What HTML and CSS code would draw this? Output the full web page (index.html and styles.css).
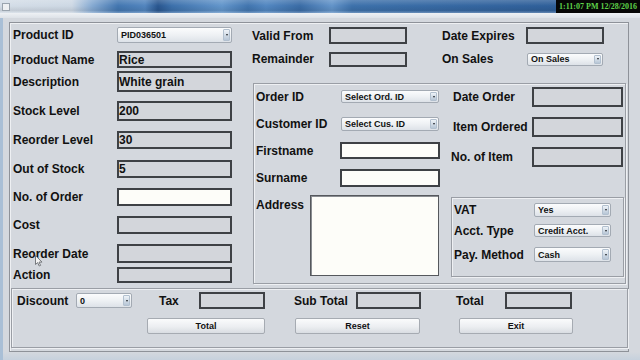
FILE: index.html
```html
<!DOCTYPE html>
<html>
<head>
<meta charset="utf-8">
<link rel="stylesheet" href="styles.css">
</head>
<body>
<div class="titlebar">
  <span class="appicon"></span>
  <div class="clock">1:11:07 PM 12/28/2016</div>
</div>
<div class="subbar"></div>
<div class="window">
  <div class="frame">
    <div class="upper">
      <div class="left-col">
        <div class="lrow r1"><label>Product ID</label><div class="select"><span class="stext">PID036501</span><span class="arrow"><i></i></span></div></div>
        <div class="lrow r2"><label>Product Name</label><div class="box">Rice</div></div>
        <div class="lrow r3"><label>Description</label><div class="box">White grain</div></div>
        <div class="lrow r4"><label>Stock Level</label><div class="box">200</div></div>
        <div class="lrow r5"><label>Reorder Level</label><div class="box">30</div></div>
        <div class="lrow r6"><label>Out of Stock</label><div class="box">5</div></div>
        <div class="lrow r7"><label>No. of Order</label><div class="box white"></div></div>
        <div class="lrow r8"><label>Cost</label><div class="box"></div></div>
        <div class="lrow r9"><label>Reorder Date</label><div class="box"></div></div>
        <div class="lrow r10"><label>Action</label><div class="box"></div></div>
      </div>
      <div class="right-area">
        <div class="trow t1">
          <label class="tl1">Valid From</label><div class="box tbox"></div>
          <label class="tl2">Date Expires</label><div class="box tbox"></div>
        </div>
        <div class="trow t2">
          <label class="tl1">Remainder</label><div class="box tbox short"></div>
          <label class="tl2 onsales">On Sales</label><div class="select sales"><span class="stext">On Sales</span><span class="arrow"><i></i></span></div>
        </div>
        <div class="order-panel">
          <div class="order-left">
            <div class="orow o1"><label class="ol">Order ID</label><div class="select osel"><span class="stext">Select Ord. ID</span><span class="arrow"><i></i></span></div></div>
            <div class="orow o2"><label class="ol">Customer ID</label><div class="select osel"><span class="stext">Select Cus. ID</span><span class="arrow"><i></i></span></div></div>
            <div class="orow o3"><label class="ol2">Firstname</label><div class="box white obox"></div></div>
            <div class="orow o4"><label class="ol2">Surname</label><div class="box white obox"></div></div>
            <div class="orow o5"><label class="ol3">Address</label><div class="textarea"></div></div>
          </div>
          <div class="order-right">
            <div class="rrow q1"><label class="rl">Date Order</label><div class="box rbox"></div></div>
            <div class="rrow q2"><label class="rl">Item Ordered</label><div class="box rbox"></div></div>
            <div class="rrow q3"><label class="rl wide">No. of Item</label><div class="box rbox"></div></div>
            <div class="pay-panel">
              <div class="prow p1"><label class="pl">VAT</label><div class="select psel"><span class="stext">Yes</span><span class="arrow"><i></i></span></div></div>
              <div class="prow p2"><label class="pl">Acct. Type</label><div class="select psel"><span class="stext">Credit Acct.</span><span class="arrow"><i></i></span></div></div>
              <div class="prow p3"><label class="pl">Pay. Method</label><div class="select psel"><span class="stext">Cash</span><span class="arrow"><i></i></span></div></div>
            </div>
          </div>
        </div>
      </div>
    </div>
    <div class="bottom-panel">
      <div class="brow">
        <label class="b-discount">Discount</label>
        <div class="select dsel"><span class="stext">0</span><span class="arrow"><i></i></span></div>
        <label class="b-tax">Tax</label>
        <div class="box bbox w66"></div>
        <label class="b-sub">Sub Total</label>
        <div class="box bbox w65"></div>
        <label class="b-total">Total</label>
        <div class="box bbox w67"></div>
      </div>
      <div class="buttons">
        <button class="btn btn-total">Total</button>
        <button class="btn btn-reset">Reset</button>
        <button class="btn btn-exit">Exit</button>
      </div>
    </div>
  </div>
</div>
<div class="bottombar"></div>
<svg class="cursor" width="8" height="12" viewBox="0 0 8 12"><path d="M0.5 0.5 L0.5 9.5 L2.6 7.6 L4.2 11 L5.6 10.4 L4 7.1 L7 7.1 Z" fill="#f4f4f4" stroke="#6a6d72" stroke-width="0.9"/></svg>
</body>
</html>
```
FILE: styles.css
```css
* { box-sizing: border-box; }
html, body { margin: 0; padding: 0; }
body {
  width: 640px;
  height: 360px;
  overflow: hidden;
  position: relative;
  background: #d4d8de;
  font-family: "Liberation Sans", Arial, sans-serif;
  color: #111;
}
label { font-weight: bold; font-size: 12px; white-space: nowrap; }

.titlebar {
  height: 13px;
  display: flex;
  background:
    linear-gradient(180deg, rgba(255,255,255,0.18), rgba(255,255,255,0) 45%, rgba(0,0,0,0.08) 80%, rgba(255,255,255,0.25)),
    linear-gradient(90deg, #d4dde7 0px, #cdd8e4 72px, #86aad2 92px, #4276b0 118px, #5285be 145px, #29568f 158px, #3c70ab 172px, #6396cb 222px, #4175af 248px, #5287c1 266px, #3a6ca6 300px, #6394c9 332px, #3d71ab 352px, #3668a2 450px, #2f5f99 556px);
}
.appicon {
  width: 8px; height: 8px;
  margin: 3px 0 0 2px;
  background: #eef0f2;
  border: 1px solid #9aa4ae;
}
.clock {
  margin-left: auto;
  width: 84px;
  background: #060606;
  color: #5fd24a;
  font: bold 8px "Liberation Serif", serif;
  line-height: 13px;
  text-align: center;
}
.subbar {
  height: 5px;
  background: linear-gradient(180deg, #eef1f4, #dde2e8);
}
.window {
  height: 334px;
  border-left: 3px solid #a9bfd6;
  padding: 4px 0 0 6px;
}
.bottombar {
  height: 8px;
  border-left: 3px solid #a9bfd6;
  background: linear-gradient(180deg, #d4d8de, #c6d1dd);
}
.frame {
  width: 620px;
  height: 330px;
  border: 1px solid #8e9299;
  box-shadow: inset 1px 1px 0 #eef0f3;
  display: flex;
  flex-direction: column;
}
.upper { display: flex; height: 264px; }

/* generic fields */
.box {
  background: #d3d6db;
  border: 2px solid #3e4145;
  font-weight: bold;
  font-size: 12px;
  padding-left: 0;
  display: flex;
  align-items: center;
  white-space: nowrap;
}
.box.white { background: #fdfdf9; }
.select {
  display: flex;
  align-items: stretch;
  border: 1px solid #a3aab3;
  border-radius: 2px;
  background: linear-gradient(180deg, #fbfcfd 0%, #eef1f4 50%, #dde2e8 100%);
  font-weight: bold;
  font-size: 9px;
}
.stext { flex: 1; display: flex; align-items: center; padding-left: 3px; white-space: nowrap; }
.arrow {
  width: 7px;
  margin: 1px;
  border-radius: 1px;
  background: linear-gradient(180deg, #eef3f8, #b7c6d6);
  border: 1px solid #b2c0cf;
  display: flex;
  align-items: center;
  justify-content: center;
}
.arrow i {
  width: 0; height: 0;
  border-left: 1.5px solid transparent;
  border-right: 1.5px solid transparent;
  border-top: 2.5px solid #20242a;
}

/* left column */
.left-col { width: 236px; padding: 4px 0 0 3px; }
.lrow { display: flex; align-items: center; }
.lrow label { width: 104px; }
.lrow .box, .lrow .select { width: 115px; height: 100%; }
.r1 { height: 16px; }
.r2 { height: 17px; margin-top: 8px; }
.r3 { height: 21px; margin-top: 3px; }
.r4 { height: 20px; margin-top: 9px; }
.r5 { height: 18px; margin-top: 10px; }
.r6 { height: 18px; margin-top: 11px; }
.r7 { height: 18px; margin-top: 10px; }
.r8 { height: 18px; margin-top: 10px; }
.r9 { height: 19px; margin-top: 10px; }
.r10 { height: 16px; margin-top: 4px; }

/* right area */
.right-area { width: 382px; padding: 4px 0 0 6px; }
.trow { display: flex; align-items: center; }
.t1 { height: 17px; }
.t2 { height: 16px; margin-top: 7px; }
.tl1 { width: 77px; }
.tl2 { width: 84px; margin-left: 35px; }
.tl2.onsales { width: 85px; }
.tbox { width: 78px; height: 17px; }
.tbox.short { height: 15px; }
.select.sales { width: 76px; height: 13px; }

.order-panel {
  margin: 16px 0 0 1px;
  width: 373px;
  height: 201px;
  border: 1px solid #9a9ea5;
  box-shadow: inset 1px 1px 0 #eef0f3, 1px 1px 0 #eef0f3;
  display: flex;
}
.order-left { width: 190px; padding: 6px 0 0 2px; }
.orow { display: flex; align-items: center; }
.ol { width: 85px; }
.ol2 { width: 84px; }
.ol3 { width: 54px; align-self: flex-start; padding-top: 3px; }
.osel { width: 98px; height: 100%; }
.obox { width: 100px; height: 100%; }
.o1 { height: 13px; }
.o2 { height: 14px; margin-top: 14px; }
.o3 { height: 17px; margin-top: 11px; }
.o4 { height: 18px; margin-top: 10px; }
.o5 { height: 81px; margin-top: 8px; align-items: flex-start; }
.textarea {
  width: 129px; height: 81px;
  background: #fdfdf9;
  border: 1px solid #55585d;
  box-shadow: inset 1px 1px 0 #8a8d92;
}

.order-right { flex: 1; padding: 3px 0 0 9px; }
.rrow { display: flex; align-items: center; height: 20px; }
.q2, .q3 { margin-top: 10px; }
.rl { width: 79px; }
.rl.wide { width: 81px; margin-left: -2px; }
.rbox { width: 91px; height: 20px; }

.pay-panel {
  margin: 30px 0 0 -2px;
  width: 173px;
  height: 80px;
  border: 1px solid #9a9ea5;
  box-shadow: inset 1px 1px 0 #eef0f3, 1px 1px 0 #eef0f3;
  padding: 5px 0 0 2px;
}
.prow { display: flex; align-items: center; }
.pl { width: 80px; }
.psel { width: 77px; height: 100%; }
.p1 { height: 14px; }
.p2 { height: 13px; margin-top: 7px; }
.p3 { height: 15px; margin-top: 10px; }

/* bottom panel */
.bottom-panel {
  margin: 1px 0 0 1px;
  width: 617px;
  height: 60px;
  border: 1px solid #9a9ea5;
  box-shadow: inset 1px 1px 0 #eef0f3, 1px 1px 0 #eef0f3;
  padding: 3px 0 0 5px;
}
.brow { display: flex; align-items: center; height: 17px; }
.b-discount { width: 59px; }
.dsel { width: 56px; height: 15px; }
.b-tax { width: 40px; margin-left: 27px; }
.b-sub { width: 62px; margin-left: 29px; }
.b-total { width: 49px; margin-left: 35px; }
.bbox { height: 17px; }
.w66 { width: 66px; }
.w65 { width: 65px; }
.w67 { width: 67px; }

.buttons { display: flex; margin-top: 9px; height: 16px; }
.btn {
  height: 16px;
  padding: 0;
  border: 1px solid #a6abb2;
  border-radius: 2px;
  background: linear-gradient(180deg, #fafbfc 0%, #eceef1 55%, #d9dde2 100%);
  font: bold 9px "Liberation Sans", Arial, sans-serif;
  color: #111;
}
.btn-total { width: 118px; margin-left: 130px; }
.btn-reset { width: 125px; margin-left: 30px; }
.btn-exit { width: 114px; margin-left: 39px; }

.cursor { position: absolute; left: 35px; top: 255px; }
```
